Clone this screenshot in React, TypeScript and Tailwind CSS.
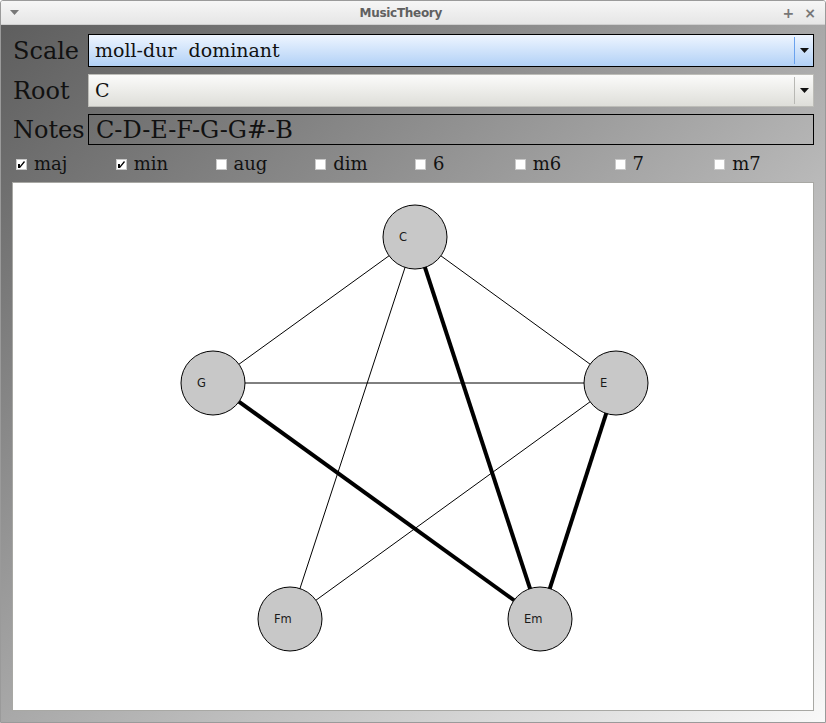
const serif = "font-['DejaVu_Serif','Liberation_Serif',serif]";

type Node = { id: string; x: number; y: number };

const nodes: Node[] = [
  { id: "C", x: 402, y: 54 },
  { id: "G", x: 200, y: 200 },
  { id: "E", x: 603, y: 200 },
  { id: "Fm", x: 277, y: 436 },
  { id: "Em", x: 527, y: 436 },
];

const edges: [string, string, boolean][] = [
  ["C", "G", false],
  ["C", "E", false],
  ["C", "Fm", false],
  ["G", "E", false],
  ["E", "Fm", false],
  ["C", "Em", true],
  ["G", "Em", true],
  ["E", "Em", true],
];

const chords = [
  { name: "maj", checked: true },
  { name: "min", checked: true },
  { name: "aug", checked: false },
  { name: "dim", checked: false },
  { name: "6", checked: false },
  { name: "m6", checked: false },
  { name: "7", checked: false },
  { name: "m7", checked: false },
];

function find(id: string) {
  return nodes.find((n) => n.id === id)!;
}

function Arrow() {
  return (
    <svg width="9" height="5" viewBox="0 0 9 5">
      <path d="M0 0 H9 L4.5 5 Z" fill="#111" />
    </svg>
  );
}

function Check({ checked }: { checked: boolean }) {
  return (
    <div className="w-[11px] h-[11px] bg-white border border-[#c8c8c8] flex items-center justify-center">
      {checked && (
        <svg width="9" height="9" viewBox="0 0 9 9">
          <path d="M1 4 L3 4 L3 6 L7 1 L8 2 L3 8 L1 8 Z" fill="#000" />
        </svg>
      )}
    </div>
  );
}

function Graph() {
  return (
    <svg width="800" height="526" className="block">
      {edges.map(([a, b, thick], i) => {
        const p = find(a);
        const q = find(b);
        return (
          <line
            key={i}
            x1={p.x}
            y1={p.y}
            x2={q.x}
            y2={q.y}
            stroke="#000"
            strokeWidth={thick ? 4 : 1}
          />
        );
      })}
      {nodes.map((n) => (
        <g key={n.id}>
          <circle cx={n.x} cy={n.y} r={32} fill="#c8c8c8" stroke="#000" strokeWidth={1} />
          <text
            x={n.x - 16}
            y={n.y + 4}
            fontSize="11.5"
            fill="#1a1a1a"
            fontFamily="'DejaVu Sans', sans-serif"
          >
            {n.id}
          </text>
        </g>
      ))}
    </svg>
  );
}

export default function App() {
  return (
    <div className="w-[826px] h-[723px] flex flex-col overflow-hidden border border-[#9a9a9a] rounded-t-[3px]">
      <div className="h-[24px] shrink-0 flex items-center px-[9px] bg-gradient-to-b from-[#f6f6f6] to-[#e6e6e6] border-b border-[#cfcfcf]">
        <svg width="9" height="5" viewBox="0 0 9 5">
          <path d="M0 0 H9 L4.5 5 Z" fill="#777" />
        </svg>
        <div className="flex-1 text-center text-[12px] font-bold text-[#606060] font-['DejaVu_Sans',sans-serif] tracking-tight">
          MusicTheory
        </div>
        <div className="flex items-center gap-[10px] text-[#777] font-['DejaVu_Sans',sans-serif] text-[14px] font-bold leading-none">
          <span>+</span>
          <span>×</span>
        </div>
      </div>

      <div className="flex-1 flex flex-col px-[11px] pt-[9px] pb-[11px] bg-gradient-to-br from-[#5e5e5e] to-[#f9f9f9]">
        <div className="grid grid-cols-[76px_1fr] gap-y-[7px] items-center">
          <div className={`${serif} text-[24px] text-[#111] leading-none pl-[1px]`}>Scale</div>
          <div className="h-[33px] flex items-stretch border border-black bg-gradient-to-b from-[#eef5ff] to-[#b2d1f6]">
            <div className={`${serif} flex-1 flex items-center pl-[6px] text-[19px] text-[#111]`}>
              moll-dur&nbsp; dominant
            </div>
            <div className="w-[19px] flex items-center justify-center border-l border-[#6aa2ee] my-[2px]">
              <Arrow />
            </div>
          </div>

          <div className={`${serif} text-[24px] text-[#111] leading-none pl-[1px]`}>Root</div>
          <div className="h-[33px] flex items-stretch border border-[#bdbdb8] bg-gradient-to-b from-[#fbfbfa] to-[#deded9]">
            <div className={`${serif} flex-1 flex items-center pl-[6px] text-[19px] text-[#111]`}>C</div>
            <div className="w-[19px] flex items-center justify-center border-l border-[#b8b8b4] my-[2px]">
              <Arrow />
            </div>
          </div>

          <div className={`${serif} text-[24px] text-[#111] leading-none pl-[1px]`}>Notes</div>
          <div className={`${serif} h-[31px] flex items-center border border-black pl-[7px] text-[24px] text-[#111]`}>
            C-D-E-F-G-G#-B
          </div>
        </div>

        <div className="grid grid-cols-8 mt-[7px] h-[24px] items-center pl-[4px]">
          {chords.map((c) => (
            <div key={c.name} className="flex items-center gap-[7px]">
              <Check checked={c.checked} />
              <span className={`${serif} text-[18px] text-[#111] leading-none`}>{c.name}</span>
            </div>
          ))}
        </div>

        <div className="mt-[6px] flex-1 bg-white border border-[#a8a8a4] overflow-hidden">
          <Graph />
        </div>
      </div>
    </div>
  );
}
